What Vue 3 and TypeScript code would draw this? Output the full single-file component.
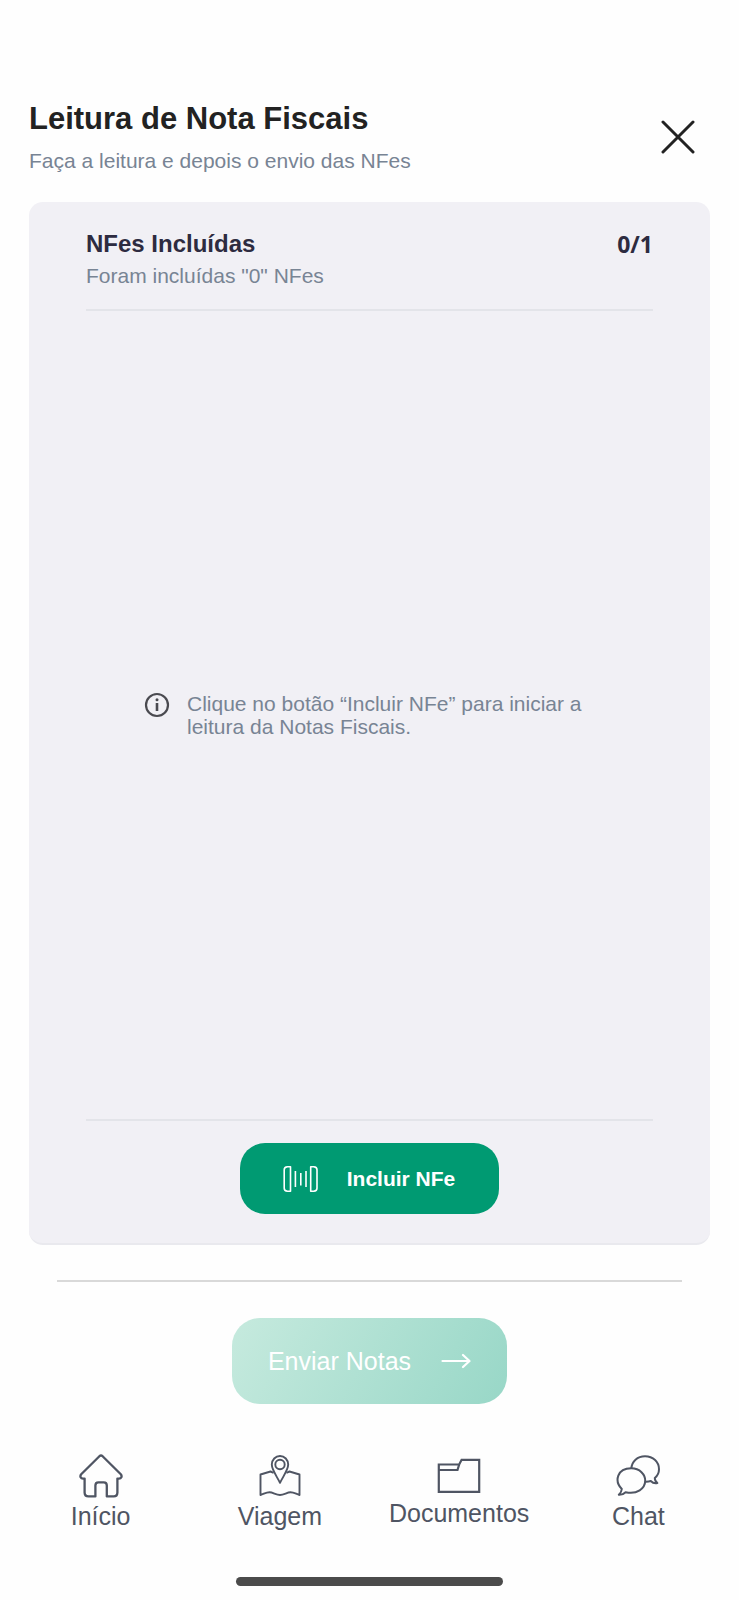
<script setup lang="ts">
import { computed, ref } from 'vue'

interface NavItem {
  id: 'home' | 'trip' | 'docs' | 'chat'
  label: string
}

const navItems: NavItem[] = [
  { id: 'home', label: 'Início' },
  { id: 'trip', label: 'Viagem' },
  { id: 'docs', label: 'Documentos' },
  { id: 'chat', label: 'Chat' },
]

const total = 1
const included = ref<number>(0)
const canSend = computed<boolean>(() => included.value >= total)

function addInvoice(): void {
  if (included.value < total) included.value += 1
}
</script>

<template>
  <div class="screen">
    <header class="header">
      <div>
        <h1 class="title">Leitura de Nota Fiscais</h1>
        <p class="subtitle">Faça a leitura e depois o envio das NFes</p>
      </div>
      <button class="close" type="button" aria-label="Fechar">
        <svg width="34" height="34" viewBox="0 0 34 34" fill="none" stroke="currentColor" stroke-width="3" stroke-linecap="round">
          <path d="M2 2L32 32M32 2L2 32" />
        </svg>
      </button>
    </header>

    <main class="card">
      <div class="summary">
        <div>
          <h2 class="summary-title">NFes Incluídas</h2>
          <p class="summary-text">Foram incluídas "{{ included }}" NFes</p>
        </div>
        <span class="count">{{ included }}/{{ total }}</span>
      </div>

      <div class="empty">
        <svg class="info" width="26" height="26" viewBox="0 0 26 26" fill="none" stroke="currentColor">
          <circle cx="13" cy="13" r="11" stroke-width="2.2" />
          <path d="M13 11V19" stroke-width="2.6" />
          <circle cx="13" cy="7.8" r="1.5" fill="currentColor" stroke="none" />
        </svg>
        <p class="hint">Clique no botão “Incluir NFe” para iniciar a leitura da Notas Fiscais.</p>
      </div>

      <div class="card-footer">
        <button class="include" type="button" @click="addInvoice">
          <svg width="36" height="28" viewBox="0 0 36 28" fill="none" stroke="currentColor" stroke-width="1.6" stroke-linejoin="round">
            <path d="M7.5 1.8H4.5Q1.2 2 1.2 4.8V23.2Q1.2 26 4.5 26.2H7.5Z" />
            <path d="M27.7 1.8H30.7Q34 2 34 4.8V23.2Q34 26 30.7 26.2H27.7Z" />
            <path d="M12.4 6V22M17.8 8V20.5M23 6V22" />
          </svg>
          <span>Incluir NFe</span>
        </button>
      </div>
    </main>

    <div class="send-area">
      <button class="send" type="button" :disabled="!canSend">
        <span>Enviar Notas</span>
        <svg width="30" height="16" viewBox="0 0 30 16" fill="none" stroke="currentColor" stroke-width="2.2" stroke-linecap="round" stroke-linejoin="round">
          <path d="M1.5 8H28M22 2L28.5 8L22 14" />
        </svg>
      </button>
    </div>

    <nav class="nav">
      <a v-for="item in navItems" :key="item.id" class="nav-item" :class="item.id" href="#">
        <svg v-if="item.id === 'home'" width="44" height="44" viewBox="0 0 44 44" fill="none" stroke="currentColor" stroke-width="2.3" stroke-linejoin="round" stroke-linecap="round">
          <path d="M20.4 2.2Q22 .9 23.6 2.2L41.8 20.2C43.5 22.3 42.2 24.6 40 24.6H38.4V38.6Q38.2 42.4 34.8 42.4H27.8V31.5Q27.8 28.4 24.8 28.4H19.4Q16.4 28.4 16.4 31.5V42.4H9.4Q5.8 42.4 5.6 38.6V24.6H4C1.8 24.6.5 22.3 2.2 20.2Z" />
        </svg>
        <svg v-else-if="item.id === 'trip'" width="44" height="44" viewBox="0 0 44 44" fill="none" stroke="currentColor" stroke-width="1.9" stroke-linejoin="round">
          <path d="M22 28.8C19 22.5 13.8 16 13.8 10.6A8.2 8.6 0 0 1 30.2 10.6C30.2 16 25 22.5 22 28.8Z" />
          <circle cx="22" cy="10.5" r="4.7" />
          <path d="M15.6 18.8L12.5 17.5L2.5 20.5V41C6 40 8 38.3 11.5 38.3S18 41 22 41S29 38.3 32.5 38.3S38 40 41.5 41V20.5L31.5 17.5L28.4 18.8" />
        </svg>
        <svg v-else-if="item.id === 'docs'" width="44" height="36" viewBox="0 0 44 36" fill="none" stroke="currentColor" stroke-width="2.2">
          <path d="M1.8 6.5H22.2L24.6 1.8H42.2V33.8H1.8ZM1.8 12H20.5L22.2 6.5" />
        </svg>
        <svg v-else width="44" height="44" viewBox="0 0 44 44" fill="none" stroke="currentColor" stroke-width="2" stroke-linejoin="round">
          <path d="M5.8 35C-2 27 1.2 14.3 15.2 14.3C24 14.3 29.2 20.5 29.2 26.6C29.2 34.6 21 40.8 9.6 38.2C7.5 40.3 5.6 41 2.8 40.8C4.8 39 5.6 37.3 5.8 35Z" />
          <path d="M15.4 14.3C15.8 7.5 21.4 2.2 29 2.2C37.2 2.2 43 8 43 15.2C43 19 41.4 21.8 38.8 24C38.8 26.4 39.6 27.8 41.4 29C38.6 29.6 36.4 28.7 34.8 27C32.8 27.6 31 27.7 29.1 27.6" />
        </svg>
        <span>{{ item.label }}</span>
      </a>
    </nav>
    <div class="indicator"></div>
  </div>
</template>

<style>
body {
  background: #fefefe;
}
</style>

<style scoped>
.screen {
  box-sizing: border-box;
  display: flex;
  flex-direction: column;
  min-height: 100vh;
  padding-top: 100px;
  font-family: "Liberation Sans", Arial, sans-serif;
  color: #788494;
}

h1,
h2,
p {
  margin: 0;
}

button {
  border: 0;
  padding: 0;
  font-family: inherit;
}

svg {
  display: block;
  flex: none;
}

.header {
  display: flex;
  justify-content: space-between;
  align-items: center;
  padding: 0 44px 28px 29px;
}

.title {
  font-size: 31px;
  line-height: 38px;
  color: #222;
}

.subtitle {
  margin-top: 10px;
  font-size: 21px;
  line-height: 26px;
}

.close {
  background: none;
  color: #222;
}

.card {
  flex: 1;
  display: flex;
  flex-direction: column;
  box-sizing: border-box;
  margin: 0 29px;
  padding: 26px 57px 29px;
  border-bottom: 2px solid #e9e9ee;
  border-radius: 14px;
  background: #f1f0f5;
}

.summary {
  display: flex;
  justify-content: space-between;
  align-items: flex-start;
  padding-bottom: 17px;
  border-bottom: 2px solid #e3e4e9;
}

.summary-title {
  font-size: 24px;
  line-height: 32px;
  color: #2d2b40;
}

.summary-text {
  font-size: 21px;
  line-height: 32px;
}

.count {
  font-family: "Open Sans", "Noto Sans", sans-serif;
  font-size: 23px;
  line-height: 32px;
  font-weight: 700;
  color: #2d2b40;
}

.empty {
  flex: 1;
  display: flex;
  justify-content: center;
  align-items: center;
  gap: 17px;
}

.info {
  margin-bottom: 20px;
  color: #4a4a50;
}

.hint {
  max-width: 408px;
  font-size: 21px;
  line-height: 23px;
}

.card-footer {
  display: flex;
  justify-content: center;
  padding-top: 22px;
  border-top: 2px solid #e3e4e9;
}

.include {
  display: flex;
  align-items: center;
  gap: 28px;
  padding: 0 44px 0 43px;
  height: 71px;
  border-radius: 25px;
  background: #009a72;
  color: #fff;
  font-size: 21px;
  font-weight: 700;
}

.send-area {
  display: flex;
  justify-content: center;
  margin: 35px 57px 0;
  padding-top: 36px;
  border-top: 2px solid #d9d9d9;
}

.send {
  display: flex;
  align-items: center;
  gap: 30px;
  padding: 0 36px;
  height: 86px;
  border-radius: 28px;
  background: linear-gradient(120deg, #c6eade, #98d7c7);
  color: #fff;
  font-size: 25px;
}

.nav {
  display: grid;
  grid-template-columns: repeat(4, 1fr);
  margin-top: 50px;
  padding: 0 11px;
}

.nav-item {
  display: flex;
  flex-direction: column;
  align-items: center;
  gap: 3px;
  font-size: 25px;
  line-height: 30px;
  color: #4f5563;
  text-decoration: none;
}

.docs {
  gap: 4px;
  padding-top: 4px;
}

.indicator {
  align-self: center;
  width: 36%;
  height: 9px;
  margin: 46px 0 14px;
  border-radius: 5px;
  background: #4b4b4b;
}
</style>
